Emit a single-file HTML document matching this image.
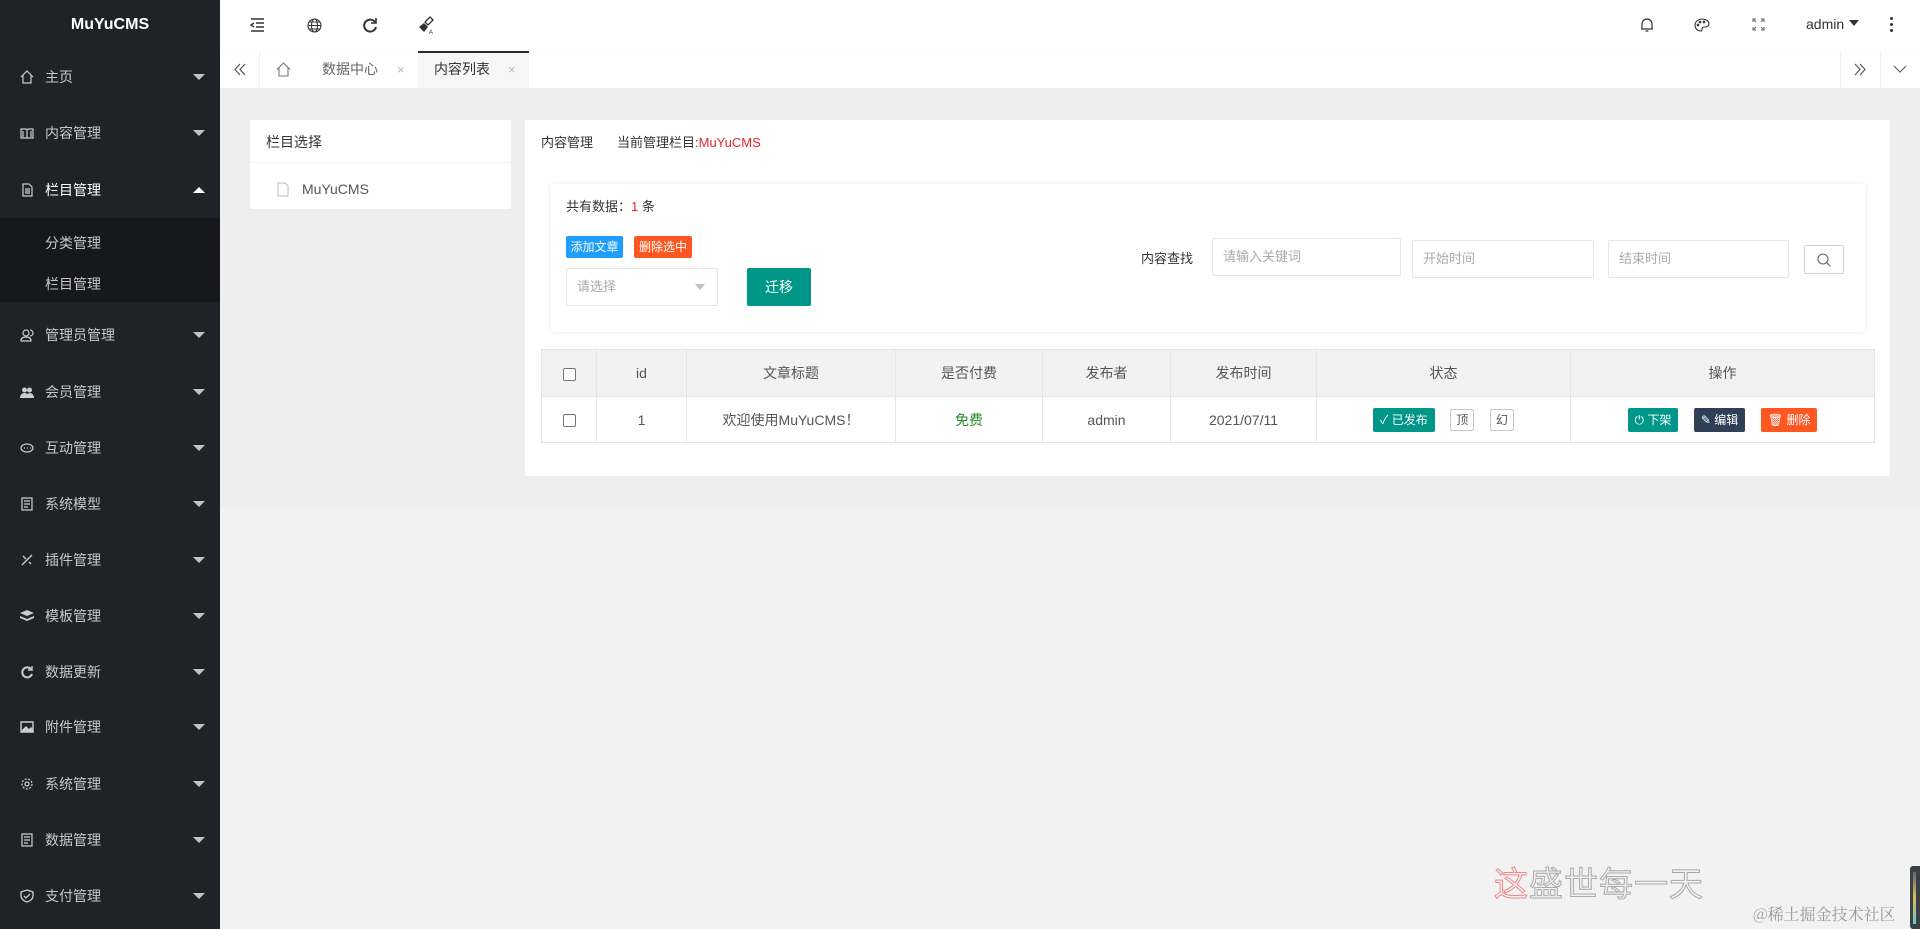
<!DOCTYPE html>
<html><head><meta charset="utf-8"><style>
*{margin:0;padding:0;box-sizing:border-box}
body{width:1920px;height:929px;overflow:hidden;background:#f2f2f2;font-family:"Liberation Sans","Noto Sans CJK SC",sans-serif;font-size:14px;color:#333;position:relative}
.a{position:absolute}
#side{left:0;top:0;width:220px;height:929px;background:#20222a}
.logo{left:0;top:0;width:220px;height:51px;line-height:50px;text-align:center;color:#fff;font-weight:bold;font-size:16px;background:#20222a}
.mi{left:0;width:220px;height:56px;line-height:56px;color:rgba(255,255,255,.75);font-size:14px}
.mi .ic{position:absolute;left:20px;top:21px;width:14px;height:14px}
.mi .t{position:absolute;left:45px}
.mi .ar{position:absolute;left:193px;top:25px;width:0;height:0;border:6px solid transparent;border-top:6px solid #c2c2c2}
.mi .up{top:19px;border-top-color:transparent;border-bottom:6px solid #fff}
.sub{left:0;top:218px;width:220px;height:84px;background:#17181c}
.si{left:45px;color:rgba(255,255,255,.75)}
#hd{left:220px;top:0;width:1700px;height:51px;background:#fff}
#tabs{left:220px;top:51px;width:1700px;height:37px;background:#fff;box-shadow:0 1px 2px rgba(0,0,0,.12)}
.tab{top:0;height:37px;line-height:37px;color:#666;font-size:14px}
.card{background:#fff;border-radius:2px}
.btn{color:#fff;font-size:12px;text-align:center;border-radius:2px}
.inp{border:1px solid #e6e6e6;border-radius:2px;background:#fff;color:#aaa;font-size:13px;padding-left:10px;line-height:36px}
table{border-collapse:collapse;position:absolute;left:541px;top:349px;width:1334px}
td,th{border:1px solid #e6e6e6;text-align:center;font-weight:normal;font-size:14px;color:#555}
th{background:#f2f2f2;height:47px}
td{height:46px;background:#fff}
.cb{display:inline-block;width:13px;height:13px;border:1px solid #767676;border-radius:2px;background:#fff;vertical-align:middle}
.sb{display:inline-block;height:24px;line-height:24px;font-size:12px;color:#fff;border-radius:2px;padding:0 7px;vertical-align:middle}
.ob{display:inline-block;width:24px;height:22px;line-height:20px;border:1px solid #c9c9c9;font-size:12px;color:#555;vertical-align:middle;border-radius:2px}
</style></head><body>
<div id="side" class="a">
<div class="a logo">MuYuCMS</div>
<div class="a mi" style="top:49px"><svg class="ic" viewBox="0 0 14 14" fill="none" stroke="#ccc" stroke-width="1.2"><path d="M1 7L7 1l6 6M3 5v8h8V5"/></svg><span class="t">主页</span><i class="ar"></i></div>
<div class="a mi" style="top:105px"><svg class="ic" viewBox="0 0 14 14" fill="none" stroke="#ccc" stroke-width="1.2"><path d="M1 3h5l1 1 1-1h5v9H1zM7 4v8M3 5v6M11 5v6"/></svg><span class="t">内容管理</span><i class="ar"></i></div>
<div class="a mi" style="top:162px;color:#fff"><svg class="ic" viewBox="0 0 14 14" fill="none" stroke="#ccc" stroke-width="1.2"><path d="M3 1h6l3 3v9H3zM5 6h5M5 8h5M5 10h5"/></svg><span class="t">栏目管理</span><i class="ar up"></i></div>
<div class="a sub"></div>
<div class="a si" style="top:233px">分类管理</div>
<div class="a si" style="top:274px">栏目管理</div>
<div class="a mi" style="top:307px"><svg class="ic" viewBox="0 0 14 14" fill="none" stroke="#ccc" stroke-width="1.2"><circle cx="6" cy="5" r="3"/><path d="M1 13c0-3 2-4 5-4s5 1 5 4zM10 2a3 3 0 010 6"/></svg><span class="t">管理员管理</span><i class="ar"></i></div>
<div class="a mi" style="top:364px"><svg class="ic" viewBox="0 0 14 14" fill="#ccc"><circle cx="4.5" cy="5" r="2.5"/><circle cx="9.5" cy="5" r="2.5"/><path d="M0 13c0-3 2-5 4.5-5S9 10 9 13zM6 13c0-3 2-5 4-5s4 2 4 5z"/></svg><span class="t">会员管理</span><i class="ar"></i></div>
<div class="a mi" style="top:420px"><svg class="ic" viewBox="0 0 14 14" fill="none" stroke="#ccc" stroke-width="1.2"><ellipse cx="7" cy="7" rx="6" ry="4"/><path d="M4 7h1M7 7h1M10 7h1"/></svg><span class="t">互动管理</span><i class="ar"></i></div>
<div class="a mi" style="top:476px"><svg class="ic" viewBox="0 0 14 14" fill="none" stroke="#ccc" stroke-width="1.2"><path d="M2 1h10v12H2zM4 4h6M4 7h6M4 10h4"/></svg><span class="t">系统模型</span><i class="ar"></i></div>
<div class="a mi" style="top:532px"><svg class="ic" viewBox="0 0 14 14" fill="none" stroke="#ccc" stroke-width="1.4"><path d="M2 12L12 2M3 3l3 3M9 9l2 2"/></svg><span class="t">插件管理</span><i class="ar"></i></div>
<div class="a mi" style="top:588px"><svg class="ic" viewBox="0 0 14 14" fill="#ccc"><path d="M7 1l7 3-7 3-7-3zM0 7l7 3 7-3v2l-7 3-7-3z"/></svg><span class="t">模板管理</span><i class="ar"></i></div>
<div class="a mi" style="top:644px"><svg class="ic" viewBox="0 0 14 14" fill="none" stroke="#ccc" stroke-width="2"><path d="M11 4A5 5 0 1012 9"/><path d="M12 1v4H8" stroke-width="1.5"/></svg><span class="t">数据更新</span><i class="ar"></i></div>
<div class="a mi" style="top:699px"><svg class="ic" viewBox="0 0 14 14" fill="none" stroke="#ccc" stroke-width="1.4"><path d="M1 2h12v10H1z"/><path d="M2 11l4-4 3 3 2-2 2 3z" fill="#ccc"/></svg><span class="t">附件管理</span><i class="ar"></i></div>
<div class="a mi" style="top:756px"><svg class="ic" viewBox="0 0 14 14" fill="none" stroke="#ccc" stroke-width="1.3"><circle cx="7" cy="7" r="2"/><circle cx="7" cy="7" r="5" stroke-dasharray="2 1.5"/></svg><span class="t">系统管理</span><i class="ar"></i></div>
<div class="a mi" style="top:812px"><svg class="ic" viewBox="0 0 14 14" fill="none" stroke="#ccc" stroke-width="1.2"><path d="M2 1h10v12H2zM4 4h6M4 7h6M4 10h4"/></svg><span class="t">数据管理</span><i class="ar"></i></div>
<div class="a mi" style="top:868px"><svg class="ic" viewBox="0 0 14 14" fill="none" stroke="#ccc" stroke-width="1.3"><path d="M7 1l6 2v4c0 3-3 5-6 6-3-1-6-3-6-6V3z"/><path d="M4 7l2 2 4-4"/></svg><span class="t">支付管理</span><i class="ar"></i></div>
</div>

<div id="hd" class="a"></div>
<svg class="a" style="left:250px;top:18px" width="15" height="14" viewBox="0 0 15 14" fill="none" stroke="#333" stroke-width="1.4"><path d="M1 1h13M6 5h8M6 9h8M1 13h13M4 5L1 7l3 2"/></svg>
<svg class="a" style="left:307px;top:18px" width="15" height="15" viewBox="0 0 15 15" fill="none" stroke="#333" stroke-width="1.1"><circle cx="7.5" cy="7.5" r="6.5"/><ellipse cx="7.5" cy="7.5" rx="3" ry="6.5"/><path d="M1 7.5h13M2 4h11M2 11h11"/></svg>
<svg class="a" style="left:362px;top:17px" width="16" height="16" viewBox="0 0 16 16" fill="none" stroke="#333" stroke-width="2"><path d="M13 5A6 6 0 1014 10"/><path d="M14 1v5H9" stroke-width="1.6"/></svg>
<svg class="a" style="left:418px;top:16px" width="17" height="18" viewBox="0 0 17 18"><path d="M12 1l3 3-5 5-3-3z" fill="none" stroke="#333" stroke-width="1.3"/><path d="M6 7l4 4-4 5-5-5z" fill="#333"/><text x="11" y="18" font-size="6" fill="#333">A</text></svg>
<svg class="a" style="left:1640px;top:17px" width="14" height="16" viewBox="0 0 14 16" fill="none" stroke="#333" stroke-width="1.2"><path d="M2 12V7a5 5 0 0110 0v5M1 12h12M5.5 14h3"/></svg>
<svg class="a" style="left:1694px;top:18px" width="16" height="14" viewBox="0 0 16 14" fill="none" stroke="#333" stroke-width="1.1"><path d="M8 1C4 1 1 4 1 7s2 6 6 6c1 0 1-1 1-2s1-2 3-2 4-1 4-3c0-3-3-5-7-5z"/><circle cx="4" cy="7" r=".8"/><circle cx="6" cy="4" r=".8"/><circle cx="10" cy="4" r=".8"/></svg>
<svg class="a" style="left:1752px;top:18px" width="13" height="13" viewBox="0 0 13 13" fill="none" stroke="#666" stroke-width="1"><path d="M1 4V1h3M1 1l3 3M12 4V1H9M12 1L9 4M1 9v3h3M1 12l3-3M12 9v3H9M12 12L9 9"/></svg>
<div class="a" style="left:1806px;top:16px;font-size:14px;color:#333">admin</div>
<div class="a" style="left:1849px;top:20px;border:5px solid transparent;border-top:6px solid #333"></div>
<div class="a" style="left:1890px;top:17px;width:3px;height:3px;background:#333;border-radius:50%;box-shadow:0 6px 0 #333,0 12px 0 #333"></div>

<div id="tabs" class="a">
<div class="a" style="left:0;top:0;width:40px;height:37px;border-right:1px solid #f0f0f0"></div>
<svg class="a" style="left:13px;top:12px" width="14" height="13" viewBox="0 0 14 13" fill="none" stroke="#555" stroke-width="1.2"><path d="M7 1L2 6.5 7 12M12 1L7 6.5 12 12"/></svg>
<svg class="a" style="left:56px;top:11px" width="15" height="15" viewBox="0 0 15 15" fill="none" stroke="#777" stroke-width="1.1"><path d="M1 7.5L7.5 1 14 7.5M3 5.5V14h9V5.5"/></svg>
<div class="a tab" style="left:102px">数据中心</div>
<div class="a tab" style="left:177px;color:#bbb;font-size:13px">×</div>
<div class="a" style="left:198px;top:0;width:111px;height:37px;background:#f6f6f6;border-top:2px solid #292b34"></div>
<div class="a tab" style="left:214px;color:#333">内容列表</div>
<div class="a tab" style="left:288px;color:#bbb;font-size:13px">×</div>
<div class="a" style="left:1620px;top:0;width:40px;height:37px;border-left:1px solid #f0f0f0"></div>
<svg class="a" style="left:1633px;top:12px" width="14" height="13" viewBox="0 0 14 13" fill="none" stroke="#555" stroke-width="1.2"><path d="M2 1l5 5.5L2 12M7 1l5 5.5L7 12"/></svg>
<div class="a" style="left:1660px;top:0;width:40px;height:37px;border-left:1px solid #f0f0f0"></div>
<svg class="a" style="left:1673px;top:14px" width="14" height="9" viewBox="0 0 14 9" fill="none" stroke="#666" stroke-width="1.2"><path d="M1 1l6 6 6-6"/></svg>
</div>

<div class="a" style="left:220px;top:88px;width:1700px;height:419px;background:#eeeeee"></div>

<div class="a card" style="left:250px;top:120px;width:261px;height:89px"></div>
<div class="a" style="left:250px;top:162px;width:261px;height:1px;background:#f3f3f3"></div>
<div class="a" style="left:266px;top:132px;font-size:14px;color:#333">栏目选择</div>
<svg class="a" style="left:277px;top:182px" width="12" height="15" viewBox="0 0 12 15" fill="none" stroke="#bbb" stroke-width="1"><path d="M1 1h7l3 3v10H1z"/></svg>
<div class="a" style="left:302px;top:181px;font-size:14px;color:#555">MuYuCMS</div>

<div class="a card" style="left:525px;top:120px;width:1365px;height:356px"></div>
<div class="a" style="left:541px;top:132px;font-size:13px;color:#333">内容管理</div>
<div class="a" style="left:617px;top:132px;font-size:13px;color:#333">当前管理栏目:<span style="color:#e3262b">MuYuCMS</span></div>
<div class="a" style="left:551px;top:184px;width:1314px;height:148px;background:#fff;box-shadow:0 0 6px rgba(0,0,0,.08)"></div>
<div class="a" style="left:566px;top:196px;font-size:13px;color:#333">共有数据：<span style="color:#e3262b">1</span> 条</div>
<div class="a btn" style="left:566px;top:236px;width:57px;height:22px;line-height:22px;background:#1e9fff">添加文章</div>
<div class="a btn" style="left:634px;top:236px;width:58px;height:22px;line-height:22px;background:#ff5722">删除选中</div>
<div class="a inp" style="left:566px;top:268px;width:152px;height:38px">请选择</div>
<div class="a" style="left:695px;top:284px;border:5px solid transparent;border-top:6px solid #c2c2c2"></div>
<div class="a btn" style="left:747px;top:268px;width:64px;height:38px;line-height:38px;background:#009688;font-size:14px">迁移</div>
<div class="a" style="left:1141px;top:248px;font-size:13px;color:#333">内容查找</div>
<div class="a inp" style="left:1212px;top:238px;width:189px;height:38px">请输入关键词</div>
<div class="a inp" style="left:1412px;top:240px;width:182px;height:38px">开始时间</div>
<div class="a inp" style="left:1608px;top:240px;width:181px;height:38px">结束时间</div>
<div class="a" style="left:1804px;top:245px;width:40px;height:29px;border:1px solid #d2d2d2;border-radius:2px;background:#fff"></div>
<svg class="a" style="left:1816px;top:252px" width="16" height="16" viewBox="0 0 16 16" fill="none" stroke="#666" stroke-width="1.1"><circle cx="7" cy="7" r="5"/><path d="M10.5 10.5l4 4"/></svg>

<table>
<tr><th style="width:55px"><span class="cb"></span></th><th style="width:90px">id</th><th style="width:209px">文章标题</th><th style="width:147px">是否付费</th><th style="width:128px">发布者</th><th style="width:146px">发布时间</th><th style="width:254px">状态</th><th>操作</th></tr>
<tr><td><span class="cb"></span></td><td>1</td><td>欢迎使用MuYuCMS！</td><td style="color:#2a8a2a">免费</td><td>admin</td><td>2021/07/11</td>
<td><span class="sb" style="background:#009688">✓ 已发布</span>&nbsp;&nbsp;&nbsp;&nbsp;<span class="ob">顶</span>&nbsp;&nbsp;&nbsp;&nbsp;<span class="ob">幻</span></td>
<td><span class="sb" style="background:#009688">⏻ 下架</span>&nbsp;&nbsp;&nbsp;&nbsp;<span class="sb" style="background:#2f4056">✎ 编辑</span>&nbsp;&nbsp;&nbsp;&nbsp;<span class="sb" style="background:#ff5722">🗑 删除</span></td></tr>
</table>

<div class="a" style="left:1494px;top:857px;font-size:34px;color:#f2f2f2;-webkit-text-stroke:1px #aaa;letter-spacing:1px"><span style="-webkit-text-stroke:1px #e88">这</span>盛世每一天</div>
<div class="a" style="left:1753px;top:902px;font-size:16px;color:#999;font-family:'Noto Serif CJK SC',serif">@稀土掘金技术社区</div>
<div class="a" style="left:1910px;top:866px;width:10px;height:63px;background:#3a3f48;border-radius:3px 0 0 3px"></div>
<div class="a" style="left:1913px;top:872px;width:3px;height:52px;background:linear-gradient(#666,#d9c15a,#6cb)"></div>
</body></html>
